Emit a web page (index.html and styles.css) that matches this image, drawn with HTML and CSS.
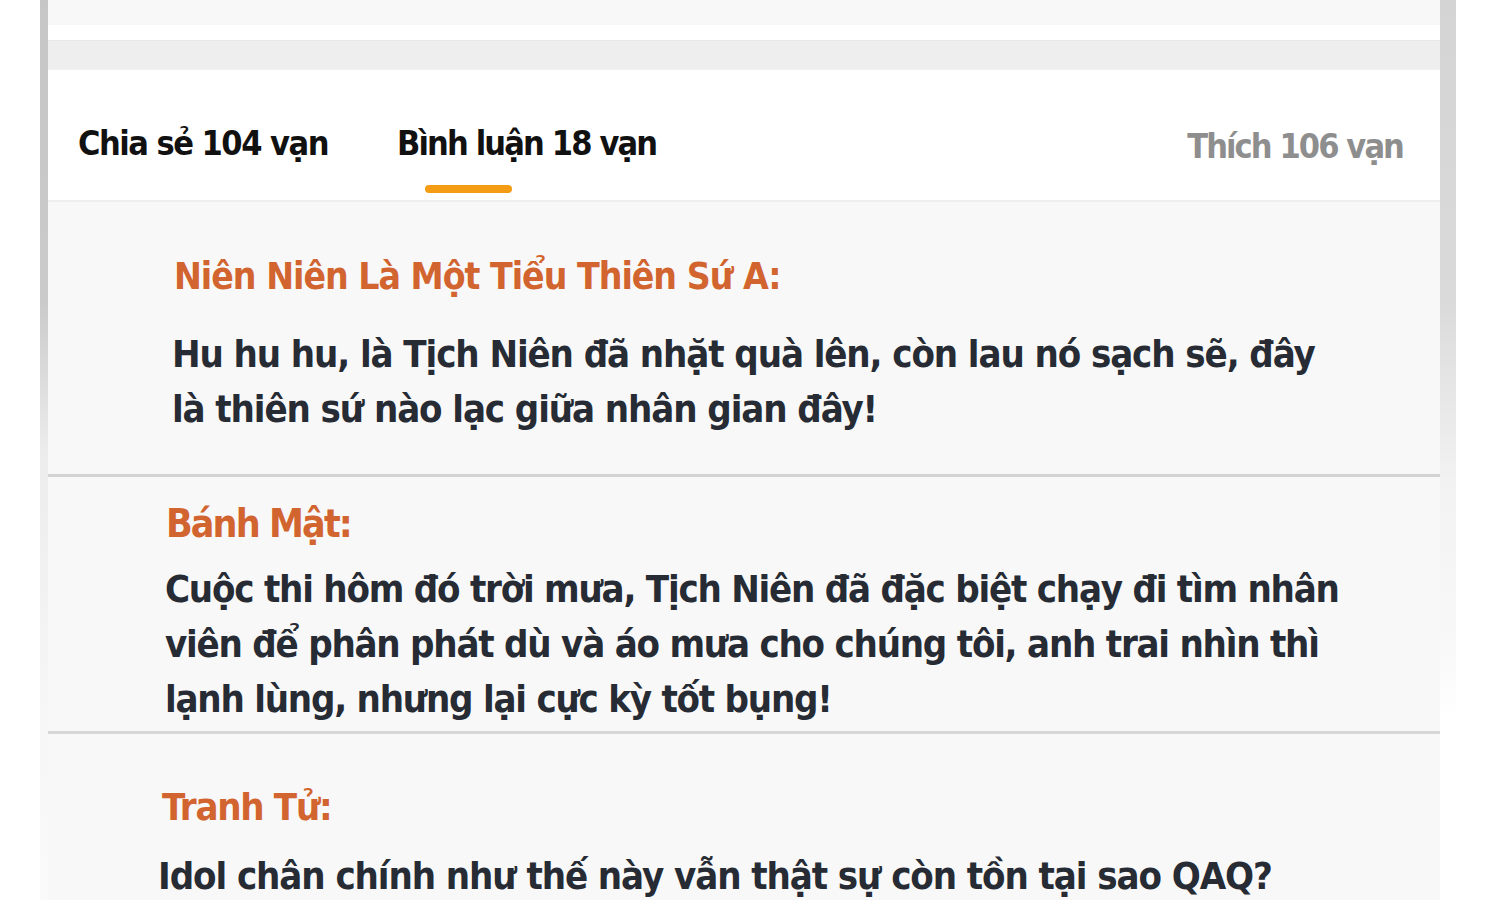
FILE: index.html
```html
<!DOCTYPE html>
<html lang="vi">
<head>
<meta charset="utf-8">
<title>Bình luận</title>
<link rel="stylesheet" href="styles.css">
</head>
<body>
<div class="frame">
  <div class="rail rail-left"></div>
  <main class="panel">
    <div class="card-tail"></div>
    <div class="gap"></div>
    <div class="band"></div>
    <nav class="tabs">
      <div class="tab tab-share">Chia sẻ 104 vạn</div>
      <div class="tab tab-comment">
        <span>Bình luận 18 vạn</span>
        <span class="indicator"></span>
      </div>
      <div class="tab tab-like">Thích 106 vạn</div>
    </nav>
    <section class="comments">
      <article class="comment c1">
        <h3 class="name">Niên Niên Là Một Tiểu Thiên Sứ A:</h3>
        <p class="body">Hu hu hu, là Tịch Niên đã nhặt quà lên, còn lau nó sạch sẽ, đây<br>là thiên sứ nào lạc giữa nhân gian đây!</p>
      </article>
      <article class="comment c2">
        <h3 class="name">Bánh Mật:</h3>
        <p class="body">Cuộc thi hôm đó trời mưa, Tịch Niên đã đặc biệt chạy đi tìm nhân<br>viên để phân phát dù và áo mưa cho chúng tôi, anh trai nhìn thì<br>lạnh lùng, nhưng lại cực kỳ tốt bụng!</p>
      </article>
      <article class="comment c3">
        <h3 class="name">Tranh Tử:</h3>
        <p class="body">Idol chân chính như thế này vẫn thật sự còn tồn tại sao QAQ?</p>
      </article>
    </section>
  </main>
  <div class="rail rail-right"></div>
</div>
</body>
</html>
```

FILE: styles.css
```css
html, body {
  margin: 0;
  padding: 0;
  background: #ffffff;
}

body {
  font-family: "DejaVu Sans Condensed", "DejaVu Sans", sans-serif;
  font-weight: 700;
}

.frame {
  display: flex;
  width: 1416px;
  height: 900px;
  margin-left: 40px;
  overflow: hidden;
}

.rail {
  flex-shrink: 0;
}

.rail-left {
  width: 8px;
  background: linear-gradient(to bottom, #c6c6c6 0px, #cacaca 300px, #ececec 450px, #f6f6f6 700px, #fafafa 900px);
}

.rail-right {
  width: 16px;
  background: linear-gradient(to bottom, #d4d4d4 0px, #dadada 300px, #f2f2f2 480px, #f8f8f8 640px, #ffffff 720px);
}

.panel {
  flex: 1;
  display: flex;
  flex-direction: column;
  min-width: 0;
  overflow: hidden;
}

.card-tail,
.gap,
.band,
.tabs {
  flex-shrink: 0;
}

.card-tail {
  height: 25px;
  background: #f8f8f8;
}

.gap {
  height: 15px;
  background: #ffffff;
}

.band {
  height: 30px;
  background: #eeeeee;
  box-sizing: border-box;
  border-top: 1px solid #e8e8e8;
  border-bottom: 1px solid #f1f1f1;
}

.tabs {
  height: 130px;
  box-sizing: border-box;
  display: flex;
  align-items: flex-start;
  padding: 53px 37px 0 30px;
  background: #ffffff;
  font-size: 34px;
  line-height: 40px;
  letter-spacing: -1.5px;
}

.tab {
  white-space: nowrap;
}

.tab-share {
  width: 319px;
  color: #111111;
}

.tab-comment {
  display: flex;
  flex-direction: column;
  color: #111111;
  letter-spacing: -1.85px;
}

.indicator {
  width: 87px;
  height: 8px;
  margin: 22px 0 0 28px;
  border-radius: 4px;
  background: #f49c13;
}

.tab-like {
  margin-left: auto;
  padding-top: 3px;
  color: #8e8e8e;
  letter-spacing: -1.9px;
}

.comments {
  flex: 1 1 auto;
  min-height: 0;
  background: #f8f8f9;
  border-top: 2px solid #efefef;
}

.comment {
  color: #262b34;
}

.name {
  margin: 0;
  font-size: 37px;
  line-height: 44px;
  font-weight: 700;
  letter-spacing: -1px;
  color: #d2642f;
}

.body {
  margin: 0;
  font-size: 38px;
  line-height: 55px;
  letter-spacing: -1.1px;
  white-space: nowrap;
}

.c1 {
  padding: 53px 0 37px;
  border-bottom: 3px solid #d4d4d4;
}

.c1 .name { padding-left: 126px; }
.c1 .body { padding-left: 124px; margin-top: 28px; }

.c2 {
  padding: 25px 0 4px;
  border-bottom: 3px solid #d6d6d6;
}

.c2 .name { padding-left: 118px; font-size: 39px; letter-spacing: -1.9px; }
.c2 .body { padding-left: 117px; margin-top: 16px; letter-spacing: -1.23px; }

.c3 {
  padding: 51px 0 0;
}

.c3 .name { padding-left: 114px; font-size: 38px; letter-spacing: -1.3px; }
.c3 .body { padding-left: 110px; margin-top: 20px; letter-spacing: -1.08px; }
```
